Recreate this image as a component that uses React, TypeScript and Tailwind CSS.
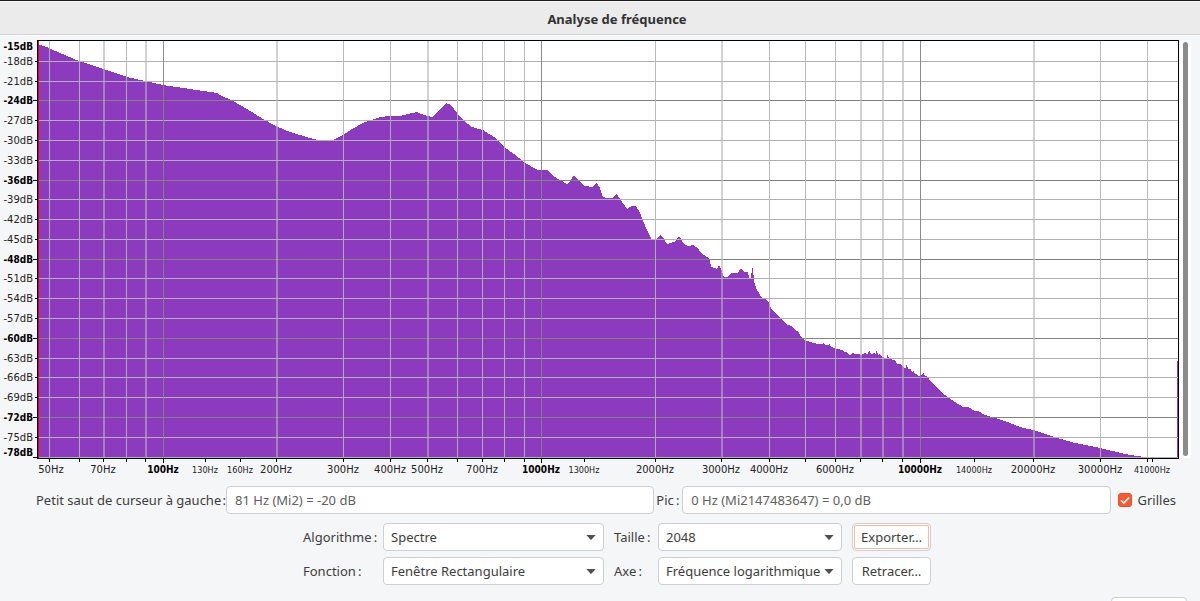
import type { ReactNode } from "react";

type YTick = { db: number; y: number; label?: number };

const yTicks: YTick[] = [
  { db: -15, y: 40, label: 46 },
  { db: -18, y: 61 },
  { db: -21, y: 81 },
  { db: -24, y: 100 },
  { db: -27, y: 120 },
  { db: -30, y: 140 },
  { db: -33, y: 160 },
  { db: -36, y: 180 },
  { db: -39, y: 199 },
  { db: -42, y: 219 },
  { db: -45, y: 239 },
  { db: -48, y: 259 },
  { db: -51, y: 278 },
  { db: -54, y: 298 },
  { db: -57, y: 318 },
  { db: -60, y: 338 },
  { db: -63, y: 358 },
  { db: -66, y: 377 },
  { db: -69, y: 397 },
  { db: -72, y: 417 },
  { db: -75, y: 437 },
  { db: -78, y: 457, label: 452 },
];

const majorDb = [-15, -24, -36, -48, -60, -72, -78];

type XTick = { x: number; wide?: boolean; major?: boolean; grid?: boolean; small?: boolean; text?: string; tx?: number };

const xTicks: XTick[] = [
  { x: 49, text: "50Hz", tx: 51 },
  { x: 79 },
  { x: 103, wide: true, text: "70Hz" },
  { x: 126 },
  { x: 145, wide: true },
  { x: 163, major: true, text: "100Hz" },
  { x: 205, grid: false, small: true, text: "130Hz" },
  { x: 240, grid: false, small: true, text: "160Hz" },
  { x: 276, wide: true, text: "200Hz" },
  { x: 343, text: "300Hz" },
  { x: 390, text: "400Hz" },
  { x: 427, wide: true, text: "500Hz" },
  { x: 457 },
  { x: 482, text: "700Hz" },
  { x: 504 },
  { x: 524 },
  { x: 541, major: true, text: "1000Hz" },
  { x: 584, grid: false, small: true, text: "1300Hz" },
  { x: 655, text: "2000Hz" },
  { x: 721, wide: true, text: "3000Hz" },
  { x: 769, text: "4000Hz" },
  { x: 805 },
  { x: 835, text: "6000Hz" },
  { x: 860, wide: true },
  { x: 882, wide: true },
  { x: 902, wide: true },
  { x: 920, major: true, text: "10000Hz" },
  { x: 974, grid: false, small: true, text: "14000Hz" },
  { x: 1033, wide: true, text: "20000Hz" },
  { x: 1100, text: "30000Hz" },
  { x: 1147 },
  { x: 1152, grid: false, small: true, text: "41000Hz" },
];

const curve =
  "38,44 49,48 60,53 79,61 104,69 127,77 145,81 163,85 190,89 217,93 220,95 233,101 247,109 263,119 276,126 290,132 300,135 310,138 318,140 333,140 343,135 352,129 363,123 380,117 390,116 400,116 408,114 417,112 424,115 432,117 438,112 442,107 446,103 451,105 457,113 463,120 472,127 483,130 494,137 504,147 514,154 524,162 532,167 538,170 547,170 553,176 562,181 567,184 571,180 574,175 579,181 585,186 592,187 597,183 600,188 603,197 606,198 612,198 617,194 620,199 627,209 632,206 636,206 640,213 646,228 652,240 657,239 660,235 664,239 667,244 671,243 676,241 679,236 684,244 688,246 693,245 698,248 701,253 707,257 710,260 711,267 717,269 719,265 722,271 724,277 727,277 731,273 738,273 741,268 744,272 748,272 749,278 751,278 752,268 753,268 754,282 757,290 762,298 766,299 769,303 772,310 776,313 780,318 786,324 791,326 796,331 798,331 801,337 804,340 810,342 818,344 822,344 823,343 824,343 825,345 828,345 829,344 830,344 831,347 834,348 842,350 843,349 844,352 847,352 849,355 851,355 852,353 855,354 859,354 861,355 865,353 866,354 868,354 869,351 870,351 871,354 874,353 876,354 876,351 877,351 878,355 880,354 882,357 885,358 887,358 887,355 888,355 889,359 895,360 897,364 900,364 902,366 904,368 906,368 906,365 907,365 908,369 911,369 912,372 914,371 915,374 917,374 918,376 920,376 921,374 922,376 923,373 924,373 925,376 927,376 928,378 929,378 930,381 931,380 932,383 936,386 939,390 945,395 952,400 963,407 968,407 975,411 978,411 985,415 992,417 1005,421 1020,427 1033,430 1054,437 1075,443 1100,448 1125,454 1144,457 1144,458 38,458";

function Spectrum() {
  return (
    <svg viewBox="0 37 1180 441" className="block min-w-0 flex-1" role="img">
      <g shapeRendering="crispEdges">
        <rect x="38" y="41" width="1140" height="417" fill="#fff" />
        <polygon points={curve} fill="#8c3abe" />
        <rect x="1177" y="361" width="1" height="97" fill="#8c3abe" />
        {yTicks.slice(1).map((t) => (
          <rect
            key={t.db}
            x="38"
            y={t.y}
            width="1140"
            height="1"
            fill={majorDb.includes(t.db) && t.db !== -78 ? "#828282" : "#b2b0b3"}
          />
        ))}
        {xTicks
          .filter((t) => t.grid !== false)
          .map((t) => (
            <rect
              key={t.x}
              x={t.x}
              y="41"
              width={t.wide ? 2 : 1}
              height="417"
              fill={t.major ? "#828282" : "#b4b4b4"}
              fillOpacity={t.wide ? 0.6 : 0.92}
            />
          ))}
        <rect x="37" y="40" width="1142" height="1" fill="#000" />
        <rect x="37" y="40" width="1" height="419" fill="#000" />
        <rect x="1178" y="40" width="1" height="419" fill="#000" />
        <rect x="37" y="458" width="1142" height="1" fill="#000" />
        <rect x="38" y="41" width="1" height="417" fill="#e00000" />
        {yTicks.slice(1).map((t) => (
          <rect
            key={t.db}
            x={majorDb.includes(t.db) ? 33 : 35}
            y={t.y}
            width={majorDb.includes(t.db) ? 4 : 2}
            height="1"
            fill="#000"
          />
        ))}
        {xTicks.map((t) => (
          <rect key={t.x} x={t.x} y="459" width="1" height={t.major ? 4 : 3} fill="#000" />
        ))}
      </g>
      {yTicks.map((t) => (
        <text
          key={t.db}
          x="33"
          y={(t.label ?? t.y) + 4}
          textAnchor="end"
          className={
            majorDb.includes(t.db)
              ? "fill-black font-['DejaVu_Sans_Condensed','DejaVu_Sans',sans-serif] text-[10px] font-bold"
              : "fill-[#222] font-['DejaVu_Sans',sans-serif] text-[10px]"
          }
        >
          {t.db}dB
        </text>
      ))}
      {xTicks
        .filter((t) => t.text)
        .map((t) => (
          <text
            key={t.x}
            x={t.tx ?? t.x}
            y="473"
            textAnchor="middle"
            className={
              t.major
                ? "fill-black font-['DejaVu_Sans_Condensed','DejaVu_Sans',sans-serif] text-[10px] font-bold"
                : t.small
                  ? "fill-[#222] font-['DejaVu_Sans_Condensed','DejaVu_Sans',sans-serif] text-[9px]"
                  : "fill-[#222] font-['DejaVu_Sans',sans-serif] text-[10px]"
            }
          >
            {t.text}
          </text>
        ))}
    </svg>
  );
}

function Select({ id, value }: { id: string; value: string }) {
  return (
    <div className="grid items-center">
      <select
        id={id}
        defaultValue={value}
        className="col-start-1 row-start-1 h-7 w-full appearance-none rounded border border-[#cbd0d5] bg-white pr-5 pl-[7px]"
      >
        <option>{value}</option>
      </select>
      <svg viewBox="0 0 10 5" className="pointer-events-none col-start-1 row-start-1 mr-2 h-[5px] w-[10px] justify-self-end">
        <path d="M0.4 0H9.6L5.6 4.4Q5 5 4.4 4.4Z" fill="#505050" />
      </svg>
    </div>
  );
}

function Button({ focused, children }: { focused?: boolean; children: ReactNode }) {
  return (
    <button
      className={
        focused
          ? "ml-[10px] h-7 rounded border border-[#cbd0d5] bg-white shadow-[inset_0_0_0_1px_#fff,inset_0_0_0_2px_#f8b8a4]"
          : "ml-[10px] h-7 rounded border border-[#cbd0d5] bg-white"
      }
    >
      {children}
    </button>
  );
}

export default function App() {
  return (
    <div className="flex h-screen flex-col overflow-hidden bg-[#f5f6f8] font-['Noto_Sans',sans-serif] text-[13px] leading-5 text-[#3d3d3d]">
      <header className="flex h-9 shrink-0 items-center justify-center border-t border-b border-t-[#1c1a1e] border-b-white bg-[#ebebeb] pt-px pl-[34px] shadow-[inset_0_1px_0_#fafafa,inset_0_-1px_0_#d3d3d3]">
        <h1 className="font-bold text-[#333]">Analyse de fréquence</h1>
      </header>

      <main className="pt-px">
        <div className="flex">
          <Spectrum />
          <div className="mt-[3px] mb-5 flex w-[11px] justify-center bg-white py-[2px]">
            <div className="w-[5px] rounded-full bg-[#8b8b8b]" />
          </div>
          <div className="w-[9px]" />
        </div>

        <div className="flex items-center pt-2 pr-6 pl-9">
          <label htmlFor="cursor" className="w-[190px] whitespace-nowrap">
            Petit saut de curseur à gauche{"\u200A"}:
          </label>
          <input
            id="cursor"
            readOnly
            value="81 Hz (Mi2) = -20 dB"
            className="h-7 min-w-0 flex-1 rounded border border-[#cbd0d5] bg-white px-2 text-[#606060]"
          />
          <label htmlFor="peak" className="w-7 pl-[2px] whitespace-nowrap">
            Pic{"\u2009"}:
          </label>
          <input
            id="peak"
            readOnly
            value="0 Hz (Mi2147483647) = 0,0 dB"
            className="h-7 min-w-0 flex-1 rounded border border-[#cbd0d5] bg-white px-2 text-[#606060]"
          />
          <label className="flex items-center gap-[6px] pl-[7px]">
            <span className="grid">
              <input
                type="checkbox"
                defaultChecked
                className="peer col-start-1 row-start-1 size-[14px] appearance-none rounded-[3px] border border-[#cbd0d5] bg-white checked:border-[#ef4f28] checked:bg-[#fb5a30]"
              />
              <svg viewBox="0 0 14 14" className="pointer-events-none invisible col-start-1 row-start-1 size-[14px] peer-checked:visible">
                <path d="M3 7.2L5.8 10L11.2 4.4" fill="none" stroke="#fff" strokeWidth="1.6" />
              </svg>
            </span>
            Grilles
          </label>
        </div>

        <div className="grid grid-cols-[80px_221px_54px_184px_89px] items-center justify-center gap-y-[6px] pt-[9px] pl-[34px]">
          <label htmlFor="algorithm">Algorithme{"\u2009"}:</label>
          <Select id="algorithm" value="Spectre" />
          <label htmlFor="size" className="pl-[10px]">Taille{"\u2009"}:</label>
          <Select id="size" value="2048" />
          <Button focused>Exporter…</Button>

          <label htmlFor="window">Fonction{"\u2009"}:</label>
          <Select id="window" value="Fenêtre Rectangulaire" />
          <label htmlFor="axis" className="pl-[10px]">Axe{"\u2009"}:</label>
          <Select id="axis" value="Fréquence logarithmique" />
          <Button>Retracer…</Button>
        </div>

        <div className="flex justify-end pt-3 pr-[13px]">
          <button className="h-7 w-[76px] rounded border border-[#cbd0d5] bg-white" />
        </div>
      </main>
    </div>
  );
}
